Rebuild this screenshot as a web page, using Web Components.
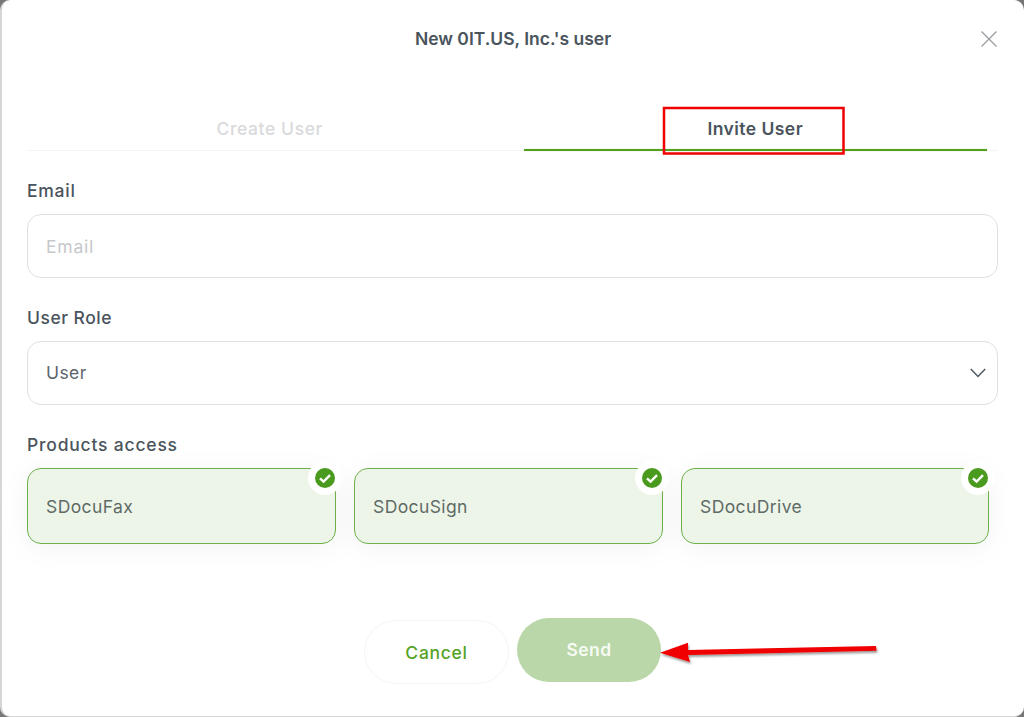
<!DOCTYPE html>
<html><head><meta charset="utf-8"><style>
html,body{margin:0;height:717px;overflow:hidden;background:#777}
body{font-family:Inter,"Open Sans",sans-serif;color:#4b5563}
</style></head><body>
<invite-modal heading="New 0IT.US, Inc.'s user">
  <modal-tabs></modal-tabs>
  <form-field label="Email" placeholder="Email"></form-field>
  <form-field label="User Role" value="User" select></form-field>
  <product-access label="Products access">
    <product-card>SDocuFax</product-card>
    <product-card>SDocuSign</product-card>
    <product-card>SDocuDrive</product-card>
  </product-access>
  <modal-actions></modal-actions>
  <tutorial-marks></tutorial-marks>
</invite-modal>
<script>
const def=(name,html)=>customElements.define(name,class extends HTMLElement{
  connectedCallback(){ if(this.shadowRoot)return; const r=this.attachShadow({mode:'open'}); r.innerHTML=typeof html==='function'?html(this):html; }
});
def('invite-modal',h=>`<style>
:host{display:block;position:relative;box-sizing:border-box;width:1024px;height:717px;background:#fff;border-radius:10px;border-left:2px solid #d6d6d6;border-bottom:1px solid #d6d6d6;padding:0 26px 0 25px;overflow:hidden}
header{height:77px;display:flex;align-items:center;justify-content:center;position:relative;font-size:17.5px;font-weight:600;color:#4a545c}
header span{margin-left:1px}
svg{position:absolute;right:0;top:31px}
</style><header><span>${h.getAttribute('heading')}</span><svg width="18" height="16" viewBox="0 0 18 16" fill="none" stroke="#9a9fa3" stroke-width="1.4"><path d="M1.5 .5 16.5 15.5M16.5 .5 1.5 15.5"/></svg></header><slot></slot>`);
def('modal-tabs',`<style>
:host{display:flex;height:74px;border-bottom:1px solid #f3f3f3;box-sizing:border-box;margin-bottom:27px}
div{flex:1;display:flex;align-items:center;justify-content:center;padding-top:30px;font-size:17.5px;box-sizing:border-box;position:relative}
.off{color:#d9dadb;font-weight:500;letter-spacing:.6px}.on{color:#4a545c;font-weight:600;letter-spacing:.45px}
.on::after{content:"";position:absolute;left:11.5px;right:11px;bottom:-1.3px;height:2.6px;background:#52a01e;box-shadow:0 0 1px rgba(82,160,30,.6)}
</style><div class="off">Create User</div><div class="on">Invite User</div>`);
def('form-field',h=>`<style>
:host{display:block;margin-bottom:28px}
:host([select]){margin-bottom:28.5px}
label{display:block;font-size:17.5px;font-weight:500;color:#4a545c;line-height:26px;margin-bottom:10px;letter-spacing:.75px}
:host([select]) label{line-height:24px;margin-bottom:10.5px;letter-spacing:.5px}
.box{box-sizing:border-box;height:64px;border:1px solid #dfe0e1;border-radius:14px;display:flex;align-items:center;justify-content:space-between;padding:0 18px;font-size:17.5px;letter-spacing:.4px;color:#5d666d}
.ph{color:#c6c8ca;letter-spacing:.8px}
svg{margin-right:-7px}
</style><label>${h.getAttribute('label')}</label><div class="box">${h.hasAttribute('select')?`<span>${h.getAttribute('value')}</span><svg width="16" height="10" viewBox="0 0 16 10" fill="none" stroke="#4f5a62" stroke-width="1.5"><path d="M.8 1 8 8.5 15.2 1"/></svg>`:`<span class="ph">${h.getAttribute('placeholder')}</span>`}</div>`);
def('product-access',h=>`<style>
:host{display:block}
label{display:block;font-size:17.5px;font-weight:500;color:#4a545c;line-height:24px;margin-bottom:11px;letter-spacing:.8px}
.g{display:grid;grid-template-columns:309px 309px 308px;gap:18px;width:962px}
</style><label>${h.getAttribute('label')}</label><div class="g"><slot></slot></div>`);
def('product-card',`<style>
:host{display:flex;align-items:center;position:relative;box-sizing:border-box;height:76px;padding:0 18px;border:1px solid #6db04a;border-radius:14px;background:#edf5e9;box-shadow:0 4px 30px rgba(0,0,0,.05);font-size:17.5px;letter-spacing:.4px;color:#5f6b66}
svg{position:absolute;right:-7px;top:-8px}
</style><slot></slot><svg width="34" height="34" viewBox="0 0 34 34"><circle cx="17" cy="17" r="17" fill="#fff"/><circle cx="17" cy="17" r="10" fill="#4a9a1e"/><path d="M12 17.3 15.6 20.6 22 14.2" fill="none" stroke="#fff" stroke-width="2.4"/></svg>`);
def('modal-actions',`<style>
:host{display:flex;justify-content:center;align-items:flex-start;gap:8px;margin-top:74px;margin-left:337px;width:297px}
div{box-sizing:border-box;width:145px;height:64px;border-radius:32px;display:flex;align-items:center;justify-content:center;font-size:17.5px}
.c{border:1px solid #f3f6f4;color:#55a325;margin-top:2px;font-weight:500;letter-spacing:.7px}.s{background:#b9d7a8;color:#f7fbf4;width:144px;font-weight:600;letter-spacing:.4px;padding-bottom:1px}
</style><div class="c">Cancel</div><div class="s">Send</div>`);
def('tutorial-marks',`<style>
:host{position:absolute;inset:0;pointer-events:none;display:block;margin-left:-2px}
svg{position:absolute;left:0;top:0}
</style><svg width="1024" height="717" viewBox="0 0 1024 717">
<defs><filter id="s" x="-10%" y="-50%" width="120%" height="200%"><feDropShadow dx="1" dy="2" stdDeviation="1.2" flood-color="#000" flood-opacity=".4"/></filter></defs>
<rect x="664" y="108" width="179.5" height="45.5" fill="none" stroke="#f00000" stroke-width="2.5"/>
<path d="M876 646 876.5 650.7 688 655 690 662 660 652.7 688 642.7 688 650Z" fill="#f00000" filter="url(#s)"/>
</svg>`);
</script></body></html>
